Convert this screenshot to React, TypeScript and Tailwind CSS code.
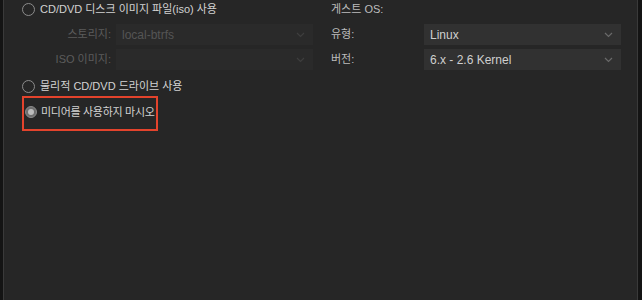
import React from 'react';

const font = { fontFamily: '"Liberation Sans", "Noto Sans CJK KR", sans-serif' };

function Chevron({ dim }: { dim?: boolean }) {
    return (
        <svg width="9" height="6" viewBox="0 0 9 6" fill="none" className={dim ? 'text-[#3e3e3e]' : 'text-[#6a6a6a]'}>
            <path d="M1 1l3.5 3.5L8 1" stroke="currentColor" strokeWidth="1.2" />
        </svg>
    );
}

function Select({ value, disabled }: { value: string; disabled?: boolean }) {
    return (
        <div
            className={`h-[21px] w-[197px] flex items-center justify-between pl-[6px] pr-[8px] text-[12px] ${
                disabled ? 'bg-[#2a2a2a] text-[#555]' : 'bg-[#313131] text-[#cfcfcf]'
            }`}
        >
            <span>{value}</span>
            <Chevron dim={disabled} />
        </div>
    );
}

function Radio({ checked }: { checked?: boolean }) {
    if (checked) {
        return (
            <span className="shrink-0 w-[12px] h-[12px] rounded-full bg-[#6e6e6e] border border-[#8a8a8a] flex items-center justify-center">
                <span className="w-[6px] h-[6px] rounded-full bg-[#bdbdbd]" />
            </span>
        );
    }
    return <span className="shrink-0 w-[13px] h-[13px] rounded-full border-[1.5px] border-[#8c8c8c]" />;
}

export default function App() {
    return (
        <div className="w-[642px] h-[300px] bg-[#141414] flex text-[11px] overflow-hidden" style={font}>
            <div className="ml-[3px] w-[635px] h-full bg-[#262626] border-x border-[#3a3a3a] flex pl-[18px]">
                {/* left column: media options */}
                <div className="w-[292px] flex flex-col">
                    <div className="h-[19px] flex items-center gap-[5px] text-[#d2d2d2]">
                        <Radio />
                        <span>CD/DVD 디스크 이미지 파일(iso) 사용</span>
                    </div>
                    <div className="mt-[5px] grid grid-cols-[89px_197px] gap-x-[5px] gap-y-[4px] items-center">
                        <span className="text-right text-[#5c5c5c]">스토리지:</span>
                        <Select value="local-btrfs" disabled />
                        <span className="text-right text-[#5c5c5c]">ISO 이미지:</span>
                        <Select value="" disabled />
                    </div>
                    <div className="mt-[6px] h-[20px] flex items-center gap-[5px] text-[#d2d2d2]">
                        <Radio />
                        <span>물리적 CD/DVD 드라이브 사용</span>
                    </div>
                    <div className="w-[136px] h-[35px] border-2 border-[#e3432c] pl-[1px] pt-[7px]">
                        <div className="h-[14px] flex items-center gap-[4px] text-[#d2d2d2] whitespace-nowrap tracking-[-0.3px]">
                            <Radio checked />
                            <span>미디어를 사용하지 마시오</span>
                        </div>
                    </div>
                </div>
                {/* right column: guest os */}
                <div className="ml-[17px] w-[290px] flex flex-col text-[#bdbdbd]">
                    <div className="h-[19px] flex items-center">게스트 OS:</div>
                    <div className="mt-[5px] grid grid-cols-[93px_197px] gap-y-[4px] items-center">
                        <span>유형:</span>
                        <Select value="Linux" />
                        <span>버전:</span>
                        <Select value="6.x - 2.6 Kernel" />
                    </div>
                </div>
            </div>
        </div>
    );
}
